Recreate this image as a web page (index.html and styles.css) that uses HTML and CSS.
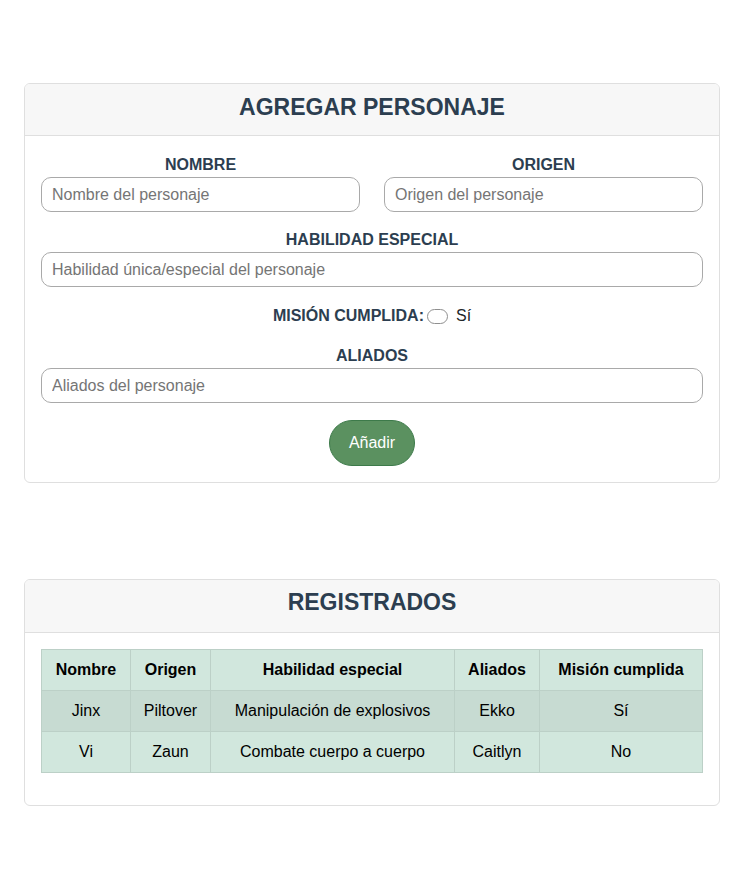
FILE: index.html
```html
<!DOCTYPE html>
<html lang="es">
<head>
<meta charset="utf-8">
<title>Personajes</title>
<link rel="stylesheet" href="styles.css">
</head>
<body>
<main class="page">
  <section class="card card-form">
    <header class="card-header"><h2 class="card-title">AGREGAR PERSONAJE</h2></header>
    <form class="card-body form">
      <div class="row-2">
        <div class="field">
          <label class="label">NOMBRE</label>
          <input class="input" type="text" placeholder="Nombre del personaje">
        </div>
        <div class="field">
          <label class="label">ORIGEN</label>
          <input class="input" type="text" placeholder="Origen del personaje">
        </div>
      </div>
      <div class="field">
        <label class="label">HABILIDAD ESPECIAL</label>
        <input class="input" type="text" placeholder="Habilidad única/especial del personaje">
      </div>
      <div class="check-row">
        <span class="label-inline">MISIÓN CUMPLIDA:</span>
        <input class="check" type="checkbox">
        <span class="check-text">Sí</span>
      </div>
      <div class="field">
        <label class="label">ALIADOS</label>
        <input class="input" type="text" placeholder="Aliados del personaje">
      </div>
      <div class="actions">
        <button class="btn" type="button">Añadir</button>
      </div>
    </form>
  </section>

  <section class="card card-table">
    <header class="card-header"><h2 class="card-title">REGISTRADOS</h2></header>
    <div class="card-body">
      <table class="table">
        <thead>
          <tr>
            <th class="c1">Nombre</th>
            <th class="c2">Origen</th>
            <th class="c3">Habilidad especial</th>
            <th class="c4">Aliados</th>
            <th class="c5">Misión cumplida</th>
          </tr>
        </thead>
        <tbody>
          <tr class="odd">
            <td>Jinx</td><td>Piltover</td><td>Manipulación de explosivos</td><td>Ekko</td><td>Sí</td>
          </tr>
          <tr>
            <td>Vi</td><td>Zaun</td><td>Combate cuerpo a cuerpo</td><td>Caitlyn</td><td>No</td>
          </tr>
        </tbody>
      </table>
    </div>
  </section>
</main>
</body>
</html>
```
FILE: styles.css
```css
* { box-sizing: border-box; }
html, body { margin: 0; padding: 0; background: #fff; }
body {
  font-family: "Liberation Sans", Arial, sans-serif;
  font-size: 16px;
  color: #212529;
}
.page {
  padding: 83px 28px 40px 24px;
  display: flex;
  flex-direction: column;
  gap: 96px;
}
.card {
  border: 1px solid #dfdfdf;
  border-radius: 6px;
  background: #fff;
  overflow: hidden;
}
.card-header {
  background: #f7f7f7;
  border-bottom: 1px solid #dfdfdf;
  padding: 9px 16px 14px;
}
.card-table .card-header { padding: 8px 16px 16px; }
.card-title {
  margin: 0;
  text-align: center;
  font-size: 23px;
  line-height: 28px;
  font-weight: bold;
  color: #2c3e50;
}
.card-body { padding: 16px; }
.form {
  display: flex;
  flex-direction: column;
  gap: 19px;
  padding-top: 20px;
}
.row-2 {
  display: grid;
  grid-template-columns: 1fr 1fr;
  gap: 24px;
}
.field { display: flex; flex-direction: column; }
.label {
  display: block;
  text-align: center;
  font-weight: bold;
  color: #2c3e50;
  line-height: 18px;
  margin-bottom: 3px;
}
.input {
  height: 35px;
  border: 1px solid #a9a9a9;
  border-radius: 10px;
  padding: 0 10px;
  font-family: inherit;
  font-size: 16px;
  color: #212529;
  outline: none;
}
.input::placeholder { color: #757575; }
.check-row {
  display: flex;
  align-items: center;
  justify-content: center;
  height: 20px;
  margin-bottom: 2px;
}
.label-inline { font-weight: bold; color: #2c3e50; }
.check {
  appearance: none;
  -webkit-appearance: none;
  width: 21px;
  height: 15px;
  border: 1px solid #8f8f8f;
  border-radius: 8px;
  margin: 0 8px 0 3px;
  background: #fff;
}
.check-text { color: #212529; }
.actions { display: flex; justify-content: center; margin-top: -2px; }
.btn {
  font-family: inherit;
  font-size: 16px;
  color: #fff;
  background: #5b9160;
  border: 1px solid #3d7a4a;
  border-radius: 24px;
  padding: 13px 19px;
  line-height: 18px;
}
.table {
  width: 100%;
  border-collapse: collapse;
  margin-bottom: 16px;
  color: #000;
  background: #d1e7dd;
}
.table th, .table td {
  border: 1px solid #bcd0c7;
  text-align: center;
  padding: 11px 8px;
  line-height: 18px;
  height: 41px;
}
.table th { font-weight: bold; }
.table tr.odd td { background: #c7dbd2; }
.c1 { width: 89px; }
.c2 { width: 80px; }
.c3 { width: 244px; }
.c4 { width: 85px; }
```
